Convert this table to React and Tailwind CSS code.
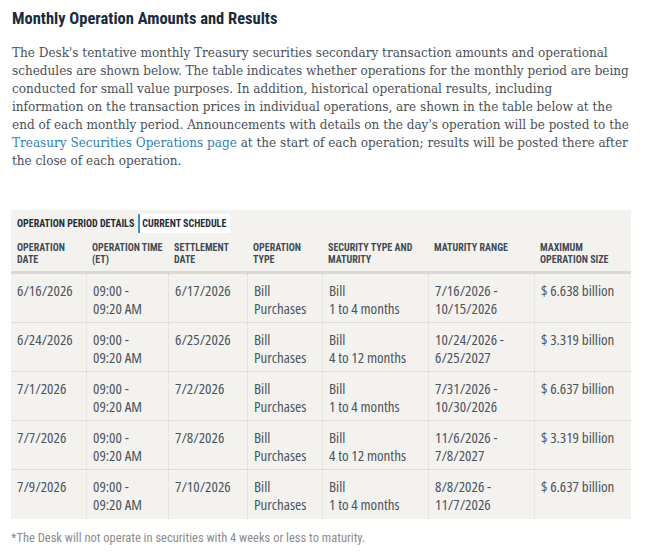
const rows = [
  ["6/16/2026", "6/17/2026", "1 to 4 months", "7/16/2026 -", "10/15/2026", "$ 6.638 billion"],
  ["6/24/2026", "6/25/2026", "4 to 12 months", "10/24/2026 -", "6/25/2027", "$ 3.319 billion"],
  ["7/1/2026", "7/2/2026", "1 to 4 months", "7/31/2026 -", "10/30/2026", "$ 6.637 billion"],
  ["7/7/2026", "7/8/2026", "4 to 12 months", "11/6/2026 -", "7/8/2027", "$ 3.319 billion"],
  ["7/9/2026", "7/10/2026", "1 to 4 months", "8/8/2026 -", "11/7/2026", "$ 6.637 billion"],
];

const cols = "grid grid-cols-[75px_82px_79px_75px_106px_106px_97px]";

function Cell({ first, children }) {
  return (
    <div
      className={
        "px-[6px] pt-[7px] pb-[5px] leading-[18px] whitespace-nowrap " +
        (first ? "" : "border-l border-dotted border-[#dedbd6]")
      }
    >
      {children}
    </div>
  );
}

const headers = [
  <>Operation<br />Date</>,
  <>Operation Time<br />(ET)</>,
  <>Settlement<br />Date</>,
  <>Operation<br />Type</>,
  <>Security Type and<br />Maturity</>,
  <>Maturity Range</>,
  <>Maximum<br />Operation Size</>,
];

export default function App() {
  const cond = "font-['Roboto_Condensed',Roboto,sans-serif] font-stretch-condensed";
  return (
    <div className="w-[661px] h-[557px] bg-white pl-[11px] pt-[9px]">
      <h2 className={cond + " text-[16.5px] font-bold leading-[20px] text-[#1b2b3b] pl-px"}>
        Monthly Operation Amounts and Results
      </h2>
      <p className="mt-[15px] pl-px font-['DejaVu_Serif_Condensed','DejaVu_Serif',serif] text-[13.4px] leading-[18px] text-[#4b5056] whitespace-nowrap">
        The Desk's tentative monthly Treasury securities secondary transaction amounts and operational
        <br />
        schedules are shown below. The table indicates whether operations for the monthly period are being
        <br />
        conducted for small value purposes. In addition, historical operational results, including
        <br />
        information on the transaction prices in individual operations, are shown in the table below at the
        <br />
        end of each monthly period. Announcements with details on the day's operation will be posted to the
        <br />
        <a className="text-[#2f7fb3]">Treasury Securities Operations page</a> at the start of each operation; results will be posted there after
        <br />
        the close of each operation.
      </p>

      <div className={cond + " mt-[40px] w-[620px] bg-[#f4f2ee]"}>
        <div className="flex pt-[4px] h-[23px] text-[10px] font-bold leading-[19px] text-[#1f2d3a] uppercase">
          <div className="pl-[6px] pr-[4px]">Operation Period Details</div>
          <div className="border-l-2 border-[#3b8fd1] bg-white pl-[2px] pr-[4px]">Current Schedule</div>
        </div>
        <div className={cols + " border-b-[3px] border-[#dad8d4] text-[10px] font-bold leading-[12px] text-[#3f4b56] uppercase"}>
          {headers.map((h, i) => (
            <div key={i} className="px-[6px] pt-[9px] pb-[5px] h-[38px] whitespace-nowrap">
              {h}
            </div>
          ))}
        </div>
        {rows.map((r, i) => (
          <div
            key={i}
            className={
              cols +
              " h-[49px] font-['Open_Sans',sans-serif] text-[15px] text-[#4a5560] " +
              (i < rows.length - 1 ? "border-b border-[#dedbd6]" : "")
            }
          >
            <Cell first>{r[0]}</Cell>
            <Cell>09:00 -<br />09:20 AM</Cell>
            <Cell>{r[1]}</Cell>
            <Cell>Bill<br />Purchases</Cell>
            <Cell>Bill<br />{r[2]}</Cell>
            <Cell>{r[3]}<br />{r[4]}</Cell>
            <Cell>{r[5]}</Cell>
          </div>
        ))}
      </div>

      <p className={cond + " mt-[11px] text-[12.5px] leading-[16px] text-[#8c8c8c]"}>
        *The Desk will not operate in securities with 4 weeks or less to maturity.
      </p>
    </div>
  );
}
